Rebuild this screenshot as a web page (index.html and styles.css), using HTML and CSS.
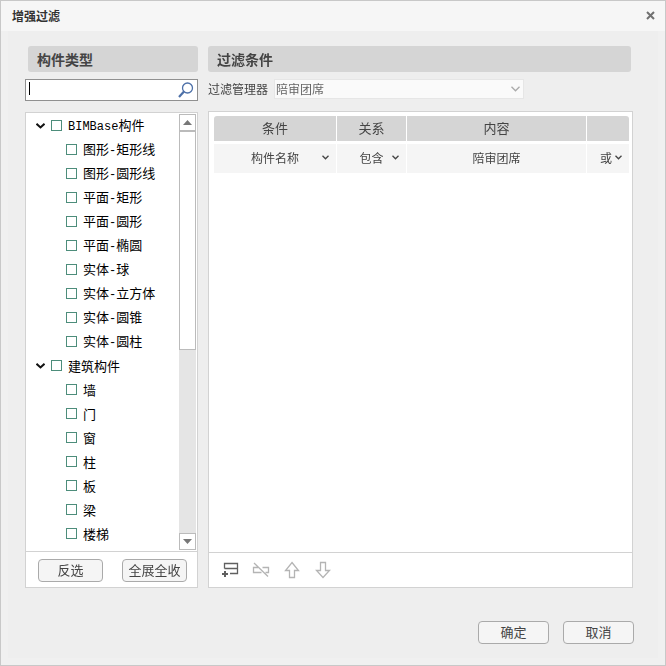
FILE: index.html
```html
<!DOCTYPE html>
<html lang="zh-CN">
<head>
<meta charset="utf-8">
<title>增强过滤</title>
<link rel="stylesheet" href="styles.css">
</head>
<body>
<div class="window">
  <header class="titlebar">
    <h1>增强过滤</h1>
    <button class="close" type="button" aria-label="关闭">
      <svg width="9" height="9" viewBox="0 0 9 9"><path d="M1 1l7 7M8 1l-7 7"/></svg>
    </button>
  </header>
  <main class="content">
    <div class="columns">
      <section class="column">
        <h2 class="heading heading-types">构件类型</h2>
        <div class="search">
          <input type="text" aria-label="搜索构件类型" autofocus>
          <svg width="16" height="16" viewBox="0 0 16 16"><circle cx="9.500" cy="6" r="5" stroke-width="1.300"/><path d="M6 9.500L1 15" stroke-width="2.200"/></svg>
        </div>
        <div class="panel">
          <div class="tree-area">
            <ul class="tree">
              <li><div class="node"><svg class="toggle" width="9" height="6" viewBox="0 0 9 6"><path d="M0.500 0.800L4.500 4.500L8.500 0.800"/></svg><label><input type="checkbox"><span><span class="latin">BIMBase</span>构件</span></label></div>
                <ul>
                  <li><label><input type="checkbox"><span>图形<span class="latin">-</span>矩形线</span></label></li>
                  <li><label><input type="checkbox"><span>图形<span class="latin">-</span>圆形线</span></label></li>
                  <li><label><input type="checkbox"><span>平面<span class="latin">-</span>矩形</span></label></li>
                  <li><label><input type="checkbox"><span>平面<span class="latin">-</span>圆形</span></label></li>
                  <li><label><input type="checkbox"><span>平面<span class="latin">-</span>椭圆</span></label></li>
                  <li><label><input type="checkbox"><span>实体<span class="latin">-</span>球</span></label></li>
                  <li><label><input type="checkbox"><span>实体<span class="latin">-</span>立方体</span></label></li>
                  <li><label><input type="checkbox"><span>实体<span class="latin">-</span>圆锥</span></label></li>
                  <li><label><input type="checkbox"><span>实体<span class="latin">-</span>圆柱</span></label></li>
                </ul>
              </li>
              <li><div class="node"><svg class="toggle" width="9" height="6" viewBox="0 0 9 6"><path d="M0.500 0.800L4.500 4.500L8.500 0.800"/></svg><label><input type="checkbox"><span>建筑构件</span></label></div>
                <ul>
                  <li><label><input type="checkbox"><span>墙</span></label></li>
                  <li><label><input type="checkbox"><span>门</span></label></li>
                  <li><label><input type="checkbox"><span>窗</span></label></li>
                  <li><label><input type="checkbox"><span>柱</span></label></li>
                  <li><label><input type="checkbox"><span>板</span></label></li>
                  <li><label><input type="checkbox"><span>梁</span></label></li>
                  <li><label><input type="checkbox"><span>楼梯</span></label></li>
                </ul>
              </li>
            </ul>
            <div class="scrollbar">
              <button type="button" aria-label="向上滚动"><svg width="9" height="5" viewBox="0 0 9 5"><path d="M4.500 0L9 5H0z"/></svg></button>
              <div class="track"><div class="thumb"></div></div>
              <button type="button" aria-label="向下滚动"><svg width="9" height="5" viewBox="0 0 9 5"><path d="M4.500 5L9 0H0z"/></svg></button>
            </div>
          </div>
          <div class="tree-actions">
            <button class="btn" type="button">反选</button>
            <button class="btn" type="button">全展全收</button>
          </div>
        </div>
      </section>
      <section class="column">
        <h2 class="heading heading-rules">过滤条件</h2>
        <div class="manager">
          <label for="manager">过滤管理器</label>
          <div class="pick pick-manager">
            <select id="manager" disabled><option>陪审团席</option></select>
            <svg width="9" height="6" viewBox="0 0 9 6"><path d="M0.500 0.800L4.500 4.800L8.500 0.800"/></svg>
          </div>
        </div>
        <div class="panel">
          <div class="rules">
            <table>
              <colgroup><col class="col-field"><col class="col-relation"><col><col class="col-join"></colgroup>
              <thead><tr><th>条件</th><th>关系</th><th>内容</th><th></th></tr></thead>
              <tbody>
                <tr>
                  <td><div class="pick"><select aria-label="条件"><option>构件名称</option></select><svg width="7" height="5" viewBox="0 0 7 5"><path d="M0.500 0.800L3.500 3.800L6.500 0.800"/></svg></div></td>
                  <td><div class="pick"><select aria-label="关系"><option>包含</option></select><svg width="7" height="5" viewBox="0 0 7 5"><path d="M0.500 0.800L3.500 3.800L6.500 0.800"/></svg></div></td>
                  <td><input type="text" value="陪审团席" aria-label="内容"></td>
                  <td><div class="pick"><select aria-label="连接"><option>或</option></select><svg width="7" height="5" viewBox="0 0 7 5"><path d="M0.500 0.800L3.500 3.800L6.500 0.800"/></svg></div></td>
                </tr>
              </tbody>
            </table>
          </div>
          <div class="toolbar">
            <button class="tool" type="button" aria-label="添加条件"><svg width="18" height="18" viewBox="0 0 18 18"><path d="M3.500 7.500V2.500H16.500V12.500H9M3.500 7.500H16.500"/><path d="M4 10V16M1 13H7" stroke-width="2"/></svg></button>
            <button class="tool" type="button" aria-label="删除条件" disabled><svg width="18" height="18" viewBox="0 0 18 18"><path d="M6 6.500H1.500V11.500H9.500M10.500 6.500H16.500V11.500H13.500M2 2L16 15.500"/></svg></button>
            <button class="tool" type="button" aria-label="上移" disabled><svg width="18" height="18" viewBox="0 0 18 18"><path d="M9 1.500L15.500 9.500H11.500V16.500H6.500V9.500H2.500z"/></svg></button>
            <button class="tool" type="button" aria-label="下移" disabled><svg width="18" height="18" viewBox="0 0 18 18"><path d="M9 16.500L15.500 9.500H11.500V1.500H6.500V9.500H2.500z"/></svg></button>
          </div>
        </div>
      </section>
    </div>
    <footer class="dialog-actions">
      <button class="btn" type="button">确定</button>
      <button class="btn" type="button">取消</button>
    </footer>
  </main>
</div>
</body>
</html>
```
FILE: styles.css
```css
* { box-sizing: border-box; }

body {
  margin: 0;
  color: #444;
  font: 12px/16px "Noto Sans CJK SC", sans-serif;
}

h1, h2, ul { margin: 0; padding: 0; }
ul { list-style: none; }

button, input, select {
  margin: 0;
  padding: 0;
  border: 0;
  border-radius: 0;
  outline: 0;
  background: none;
  color: inherit;
  font: inherit;
  appearance: none;
}

svg { display: block; fill: none; stroke: #444; }

.window {
  display: flex;
  flex-direction: column;
  height: 100vh;
  border: 1px solid #c8c8c8;
  background: #f0f0f0;
}

.titlebar {
  display: flex;
  flex: none;
  align-items: center;
  justify-content: space-between;
  height: 30px;
  padding: 0 10px 0 11px;
  background: #f6f6f6;
}

.titlebar h1 { color: #333; font-size: 12px; line-height: 16px; }
.close { padding-bottom: 2px; }
.close svg { stroke: #707070; stroke-width: 2; }

.content {
  display: flex;
  flex: 1;
  flex-direction: column;
  min-height: 0;
  margin: 0 7px 7px;
  padding: 15px 24px 14px 17px;
  background: #eee;
}

.columns {
  display: grid;
  flex: 1;
  grid-template-columns: 173px 1fr;
  gap: 10px;
  min-height: 0;
  padding-right: 1px;
}

.column { display: flex; flex-direction: column; min-width: 0; min-height: 0; }

.heading {
  flex: none;
  padding: 0 9px;
  border-radius: 3px;
  background: #d5d5d5;
  font-size: 14px;
  line-height: 26px;
}

.heading-types { margin-left: 3px; }
.heading-rules { margin-right: 2px; }

.search {
  display: flex;
  flex: none;
  align-items: center;
  height: 22px;
  margin: 7px 0 11px;
  padding: 0 3px;
  border: 1px solid #909090;
  background: #fff;
}

.search input { flex: 1; min-width: 0; color: #000; line-height: 16px; caret-color: transparent; }
.search svg { flex: none; stroke: #4d70a8; }

.search:has(input:placeholder-shown)::before,
.search::before { content: ""; width: 1px; height: 13px; margin-bottom: 3px; background: #000; }

.panel {
  display: flex;
  flex: 1;
  flex-direction: column;
  min-height: 0;
  border: 1px solid #d2d2d2;
  background: #fff;
}

.tree-area { display: flex; flex: 1; min-height: 0; padding: 1px; }

.tree {
  flex: 1;
  overflow: hidden;
  padding-left: 9px;
  color: #000;
  font-size: 13px;
  line-height: 24px;
}

.tree ul { padding-left: 30px; }
.node { display: flex; align-items: center; gap: 6px; }
.node label { gap: 5px; }
.toggle { stroke: #111; stroke-width: 2; }
.tree label { display: flex; align-items: center; gap: 6px; height: 24px; white-space: nowrap; }
.tree input { flex: none; width: 11px; height: 11px; margin-bottom: 2px; border: 1px solid #4d8d7b; }
.tree input:checked { background: #4d8d7b; }
.latin { font-family: "Liberation Mono", monospace; font-size: 12px; }

.scrollbar { display: flex; flex: none; flex-direction: column; width: 17px; background: #e5e5e5; }

.scrollbar button {
  display: grid;
  flex: none;
  place-items: center;
  height: 17px;
  border: 1px solid #bbb;
  background: #fff;
}

.scrollbar svg { fill: #777; stroke: none; }
.track { flex: 1; }
.thumb { height: 54.5%; border: 1px solid #bbb; background: #fff; }

.tree-actions {
  display: flex;
  flex: none;
  justify-content: space-between;
  padding: 7px 10px 5px 12px;
  border-top: 1px solid #d2d2d2;
}

.btn {
  width: 65px;
  height: 23px;
  padding-bottom: 2px;
  border: 1px solid #aaa;
  border-radius: 4px;
  background: #f5f5f5;
  font-size: 13px;
  line-height: 18px;
}

.manager { display: flex; flex: none; align-items: center; gap: 6px; height: 20px; margin: 7px 0 12px; }

.pick { display: grid; align-items: center; }
.pick select { grid-area: 1 / 1; width: 100%; text-align-last: center; }
.pick svg { grid-area: 1 / 1; justify-self: end; margin-right: 7px; stroke-width: 1.3; pointer-events: none; }

.pick-manager { flex: 0 0 250px; }
.pick-manager select {
  height: 20px;
  padding-left: 1px;
  border: 1px solid #e6e6e6;
  background: #fafafa;
  color: #666;
  opacity: 1;
  text-align-last: left;
}
.pick-manager svg { margin-right: 4px; stroke: #aaa; }

.rules { flex: 1; min-height: 0; padding: 1px 2px 0 4px; }

table { width: 100%; table-layout: fixed; border-collapse: separate; border-spacing: 1px 3px; }
.col-field { width: 122px; }
.col-relation { width: 69px; }
.col-join { width: 42px; }

th { height: 25px; padding: 0 0 2px; background: #d5d5d5; font-size: 13px; font-weight: 400; }
th:first-child { border-top-left-radius: 3px; }
th:last-child { border-top-right-radius: 3px; }
td { height: 29px; padding: 0 0 2px; background: #f5f5f5; }
td input { display: block; width: 100%; text-align: center; }
td:last-child select { padding-right: 4px; }

.toolbar { display: flex; flex: none; gap: 13px; padding: 8px 12px; border-top: 1px solid #d2d2d2; }
.tool svg { stroke: #606060; stroke-width: 1.3; }
.tool:disabled svg { stroke: #b4b4b4; }

.dialog-actions { display: flex; flex: none; justify-content: flex-end; gap: 14px; margin-top: 33px; }
.dialog-actions .btn { width: 71px; }
```
